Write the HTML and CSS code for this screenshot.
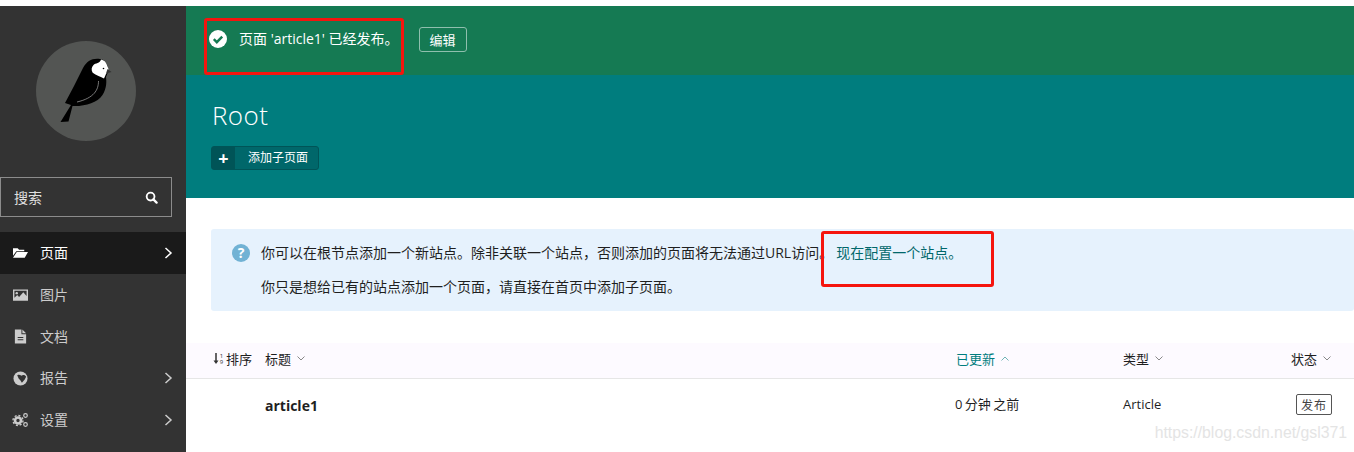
FILE: index.html
```html
<!DOCTYPE html>
<html lang="zh-CN">
<head>
<meta charset="utf-8">
<title>Root</title>
<link rel="stylesheet" href="styles.css">
</head>
<body>
<div class="app">
  <aside class="sidebar">
    <div class="logo">
      <svg class="bird" viewBox="36 41 100 100" width="100" height="100">
        <path fill="#000" d="M60.500 122 L68.500 121.500 L72.500 106 C85 106.500 97 103 102.500 95 C107 88 106.500 81 106 77 L108 72 C109 66 106 60 100 59 C92 58 87 61 83 68 C77 80 71 92 65 103 L71 105 Z"/>
        <path fill="#fff" d="M101 59.500 C104 60 106 62 107 65 L108.500 69 C108 72 106.500 73 106 74 L104 78.500 C101 77 96 75 92.700 72.700 C91 70 91.500 67 93.500 65 C95.500 63 100 63.500 101 59.500 Z"/>
        <circle cx="103.500" cy="68.500" r=".8" fill="#000"/>
        <path fill="#333" d="M107.500 69 L111.500 72 L106 73.500 Z"/>
        <path fill="none" stroke="#aaa" stroke-width=".7" d="M98.500 81 C98.500 90 94 98 77 102"/>
      </svg>
    </div>
    <form class="search">
      <span>搜索</span>
      <svg class="search-icon" viewBox="0 0 14 14" width="13" height="13"><circle cx="6" cy="6" r="4.200" fill="none" stroke="#fff" stroke-width="2"/><path d="M9 9l3.500 3.500" stroke="#fff" stroke-width="2.400" stroke-linecap="round"/></svg>
    </form>
    <nav class="nav">
      <a class="nav-item active">
        <svg class="nav-icon" viewBox="0 0 16 14" width="15" height="14"><path fill="currentColor" d="M0 2h5l1.500 1.500H12V5H3.500L0 10zM4 6h12l-3.500 6H0z"/></svg>
        <span class="nav-label">页面</span>
        <svg class="chev" viewBox="0 0 9 14" width="9" height="14"><path d="M1.500 2l5.500 5-5.500 5" fill="none" stroke="currentColor" stroke-width="1.500"/></svg>
      </a>
      <a class="nav-item">
        <svg class="nav-icon" viewBox="0 0 16 14" width="15" height="14"><path fill="currentColor" fill-rule="evenodd" d="M0 1h16v12H0zM1.500 2.500v7.500l3-3 2 2 4.500-5 3.500 4V2.500z"/><circle cx="4" cy="5" r="1.300" fill="currentColor"/></svg>
        <span class="nav-label">图片</span>
      </a>
      <a class="nav-item">
        <svg class="nav-icon" viewBox="0 0 16 15" width="15" height="15"><path fill="currentColor" fill-rule="evenodd" d="M2 0h7v5h5v10H2zM5 8v1h6V8zM5 10.500v1h6v-1zM10 0l4 4h-4z"/></svg>
        <span class="nav-label">文档</span>
      </a>
      <a class="nav-item">
        <svg class="nav-icon" viewBox="0 0 16 16" width="15" height="15"><circle cx="8" cy="8" r="7.500" fill="currentColor"/><path fill="#333" d="M4.500 4.500C6 3.500 7.500 4 9 5 10.500 3.800 13 4 14 6L12.500 9 9.500 12.500 8 10 6 8z"/></svg>
        <span class="nav-label">报告</span>
        <svg class="chev" viewBox="0 0 9 14" width="9" height="14"><path d="M1.500 2l5.500 5-5.500 5" fill="none" stroke="currentColor" stroke-width="1.500"/></svg>
      </a>
      <a class="nav-item">
        <svg class="nav-icon nav-icon-wide" viewBox="0 0 17 16" width="17" height="16"><g fill="none" stroke="currentColor"><circle cx="6" cy="8.500" r="3" stroke-width="2.600"/><circle cx="6" cy="8.500" r="5" stroke-width="1.400" stroke-dasharray="2 1.900"/><circle cx="13.500" cy="3.500" r="1.800" stroke-width="1.200"/><circle cx="13.500" cy="12.500" r="1.800" stroke-width="1.200"/></g></svg>
        <span class="nav-label">设置</span>
        <svg class="chev" viewBox="0 0 9 14" width="9" height="14"><path d="M1.500 2l5.500 5-5.500 5" fill="none" stroke="currentColor" stroke-width="1.500"/></svg>
      </a>
    </nav>
  </aside>
  <main class="main">
    <div class="message">
      <svg class="check" viewBox="0 0 18 18" width="18" height="18"><circle cx="9" cy="9" r="9" fill="#fff"/><path d="M4.800 9.200l3 3 5.400-5.600" fill="none" stroke="#157a53" stroke-width="2.400"/></svg>
      <span class="message-text">页面 'article1' 已经发布。</span>
      <a class="edit-btn">编辑</a>
    </div>
    <header class="hero">
      <h1 class="hero-title">Root</h1>
      <a class="add-btn"><span class="add-icon">+</span><span class="add-label">添加子页面</span></a>
    </header>
    <section class="info">
      <svg class="help" viewBox="0 0 18 18" width="18" height="18"><circle cx="9" cy="9" r="9" fill="#71b2d4"/><text x="9" y="13.500" text-anchor="middle" class="help-mark">?</text></svg>
      <div class="info-text">
        <p class="info-line">你可以在根节点添加一个新站点。除非关联一个站点，否则添加的页面将无法通过URL访问。<a class="info-link">现在配置一个站点。</a></p>
        <p class="info-line">你只是想给已有的站点添加一个页面，请直接在首页中添加子页面。</p>
      </div>
    </section>
    <div class="table-head">
      <span class="sort"><svg class="sort-icon" viewBox="0 0 12 13" width="12" height="13"><path d="M3 1v9" stroke="#333" stroke-width="1.500"/><path d="M.5 8.500h5L3 12z" fill="#333"/><text x="6.800" y="5.500" class="sort-num">1</text><text x="6.800" y="12" class="sort-num">9</text></svg>排序</span>
      <span class="th">标题<svg class="caret" viewBox="0 0 8 5" width="8" height="5"><path d="M.5.500L4 4 7.500.500" fill="none" stroke="#888"/></svg></span>
      <span class="th th-active">已更新<svg class="caret" viewBox="0 0 8 5" width="8" height="5"><path d="M.5 4.500L4 1l3.500 3.500" fill="none" stroke="#6fb5b5"/></svg></span>
      <span class="th">类型<svg class="caret" viewBox="0 0 8 5" width="8" height="5"><path d="M.5.500L4 4 7.500.500" fill="none" stroke="#888"/></svg></span>
      <span class="th">状态<svg class="caret" viewBox="0 0 8 5" width="8" height="5"><path d="M.5.500L4 4 7.500.500" fill="none" stroke="#888"/></svg></span>
    </div>
    <div class="table-row">
      <span></span>
      <strong class="row-title">article1</strong>
      <span class="cell cell-time">0 分钟 之前</span>
      <span class="cell">Article</span>
      <span class="status">发布</span>
    </div>
  </main>
</div>
<div class="mark mark-message"></div>
<div class="mark mark-link"></div>
<div class="watermark">https://blog.csdn.net/gsl371</div>
</body>
</html>
```
FILE: styles.css
```css
* { box-sizing: border-box; }
html, body { margin: 0; height: 452px; overflow: hidden; background: #fff; }
body {
  font-family: "Open Sans", "Noto Sans CJK SC", sans-serif;
  font-size: 13px;
  color: #1f1f1f;
  position: relative;
}
.app { display: flex; height: 452px; padding-top: 6px; }
.sidebar { width: 186px; flex: none; background: #333; color: #ccc; padding-top: 35px; }
.logo { width: 100px; height: 100px; margin-left: 36px; border-radius: 50%; background: #535553; }
.bird { display: block; }
.search {
  display: flex; align-items: center; justify-content: space-between;
  width: 172px; height: 40px; margin-top: 36px; padding: 0 13px 0 13px;
  border: 1px solid #8c8c8c;
  color: #e0e0e0; font-size: 14px;
}
.search-icon { display: block; }
.nav { margin-top: 15px; }
.nav-item { display: flex; align-items: center; height: 41.7px; padding-left: 13px; padding-right: 13px; font-size: 14px; }
.nav-item.active { background: #1a1a1a; color: #fff; height: 42px; }
.nav-icon { flex: none; display: block; }
.nav-icon-wide { margin: 0 -1px; }
.nav-label { margin-left: 12px; margin-bottom: 2px; flex: 1; }
.chev { flex: none; display: block; }
.main { flex: 1; min-width: 0; }
.message { display: flex; align-items: center; height: 69px; padding: 0 0 3px 23px; background: #157a53; color: #fff; font-size: 14px; }
.check { flex: none; display: block; }
.message-text { margin-left: 12px; margin-bottom: 2px; }
.edit-btn {
  display: flex; align-items: center; justify-content: center;
  width: 48px; height: 25px; margin-left: 20px;
  border: 1px solid #8fbfad; border-radius: 3px; font-size: 13px;
}
.hero { height: 123px; padding: 22px 0 0 26px; background: #007d7e; color: #fff; }
.hero-title { margin: 0; font-size: 26px; font-weight: 300; line-height: 36px; letter-spacing: .4px; }
.add-btn {
  display: flex; width: 108px; height: 24px; margin: 13px 0 0 -1px;
  background: #00676a; border: 1px solid #005457; border-radius: 3px; font-size: 12px;
}
.add-icon { display: flex; align-items: center; justify-content: center; width: 23px; background: #005457; font-size: 18px; font-weight: 700; line-height: 22px; }
.add-label { margin-left: 13px; line-height: 22px; }
.info {
  display: flex; height: 82px; margin: 31px 0 32px 25px; padding: 15px 0 0 21px;
  background: #e6f2fd; border-radius: 3px; font-size: 14px;
}
.help { flex: none; display: block; }
.help-mark { font-size: 14px; font-weight: 700; fill: #fff; font-family: "Open Sans", sans-serif; }
.info-text { margin: -8px 0 0 11px; }
.info-line { margin: 0; line-height: 34px; white-space: nowrap; }
.info-link { color: #00676a; margin-left: 3px; }
.table-head, .table-row {
  display: grid; grid-template-columns: 52px 691px 167px 168px 1fr; padding-left: 27px; align-items: center;
}
.table-head { height: 36px; padding-bottom: 5px; background: #fdfaff; border-bottom: 1px solid #e6e6e6; }
.sort { display: flex; align-items: center; }
.sort-icon { margin-right: 1px; display: block; }
.sort-num { font-size: 6px; fill: #333; font-family: "Open Sans", sans-serif; }
.th { display: flex; align-items: center; }
.caret { margin-left: 6px; display: block; }
.th-active { color: #007d7e; }
.table-row { height: 51px; }
.row-title { font-size: 14px; font-weight: 700; margin-top: 2px; }
.cell { margin-bottom: 2px; }
.cell-time { margin-left: -1px; word-spacing: -1px; }
.status {
  display: flex; align-items: center; justify-content: center;
  width: 36px; height: 21px; margin-left: 5px;
  border: 1px solid #555; border-radius: 2px; font-size: 12px; letter-spacing: 1px; color: #444;
}
.mark { position: absolute; border: 3px solid #f5150e; border-radius: 3px; }
.mark-message { left: 204px; top: 18px; width: 200px; height: 57px; }
.mark-link { left: 821px; top: 231px; width: 173px; height: 56px; }
.watermark {
  position: absolute; right: 7px; top: 424px;
  font-family: "Liberation Sans", sans-serif; font-size: 15.800px; color: #e4e4e4;
}
```
